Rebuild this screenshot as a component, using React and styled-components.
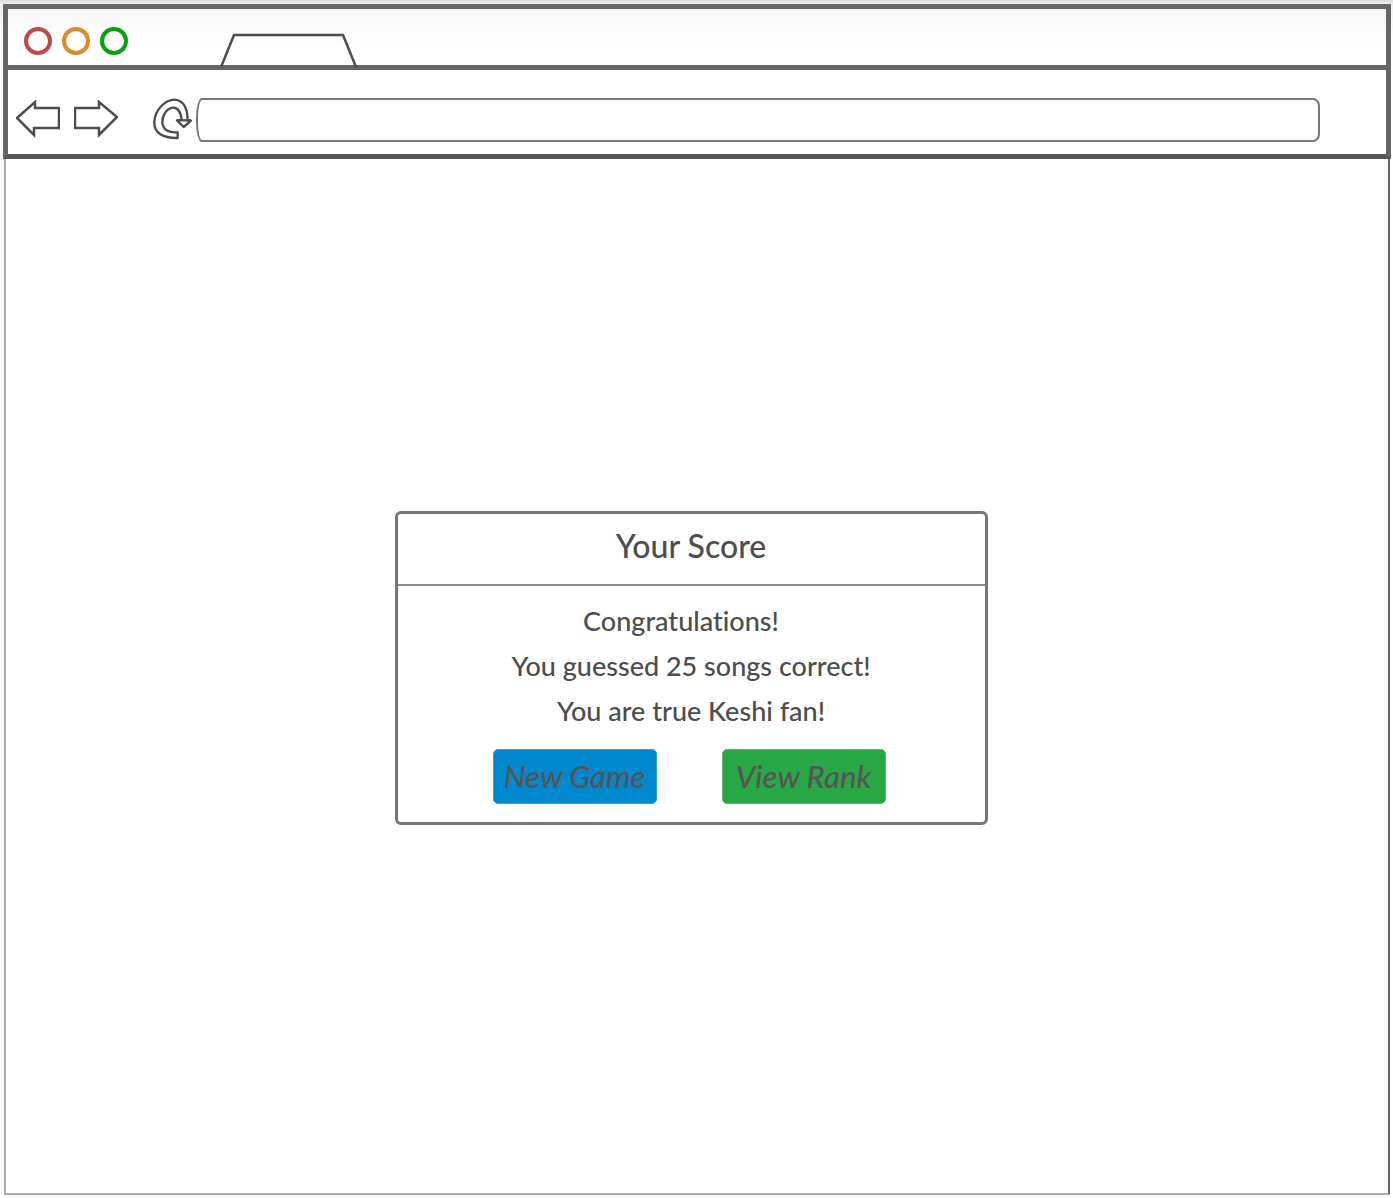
import React from "react";
import styled, { createGlobalStyle } from "styled-components";

const ink = "#666666";
const darkInk = "#4d4d4d";

const GlobalStyle = createGlobalStyle`
  * { box-sizing: border-box; }
  body {
    margin: 0;
    background: #ffffff;
    color: ${darkInk};
    font-family: Lato, "Open Sans", sans-serif;
    font-weight: 500;
    font-variant-ligatures: none;
  }
`;

const Page = styled.div`
  display: flex;
  flex-direction: column;
  min-height: 100vh;
  padding: 4px 2px 3px 3px;
  background: linear-gradient(#dddddd, #eeeeee 4px, #ffffff 40px);
`;

const Chrome = styled.header`
  border: 5px solid ${ink};
  border-bottom-color: #555555;
  background: #ffffff;
`;

const TitleBar = styled.div`
  display: flex;
  align-items: flex-end;
  justify-content: flex-start;
  height: 61px;
  padding-left: 16px;
  border-bottom: 5px solid ${ink};
  background: linear-gradient(#f7f7f7, #ffffff 36px);
`;

const WindowControls = styled.div`
  display: flex;
  gap: 10px;
  padding-bottom: 10px;
`;

const WindowButton = styled.button`
  width: 28px;
  height: 28px;
  padding: 0;
  border: 4px solid ${({ $color }) => $color};
  border-radius: 50%;
  background: #ffffff;
`;

const TabShape = styled.svg`
  display: block;
  margin: 0 0 -3px 92px;
`;

const Toolbar = styled.div`
  display: flex;
  align-items: center;
  padding: 28px 66px 12px 8px;
`;

const IconButton = styled.button`
  display: flex;
  flex: none;
  padding: 0 0 2px;
  margin-right: ${({ $gap }) => $gap}px;
  border: 0;
  background: none;
  color: ${darkInk};
`;

const AddressForm = styled.form`
  display: flex;
  flex: 1;
`;

const Address = styled.input`
  flex: 1;
  min-width: 0;
  height: 44px;
  padding: 0 12px;
  border: 2px solid #777777;
  border-radius: 6px 7px 7px 6px / 20px 8px 8px 20px;
  background: #ffffff;
  color: inherit;
  font: inherit;
  font-size: 20px;
`;

const Viewport = styled.main`
  display: flex;
  flex: 1;
  align-items: center;
  justify-content: center;
  margin: 0 1px;
  padding: 0 12px 16px 0;
  border: solid #aaaaaa;
  border-width: 0 2px 2px 2px;
  border-right-color: ${ink};
  background: #ffffff;
`;

const Card = styled.section`
  width: 593px;
  max-width: 94%;
  border: 3px solid #777777;
  border-radius: 6px;
  text-align: center;
`;

const CardTitle = styled.h1`
  margin: 0;
  padding: 12px 16px 18px;
  border-bottom: 2px solid #8c8c8c;
  font-size: 32px;
  font-weight: 500;
  line-height: 40px;
`;

const CardBody = styled.div`
  padding: 12px 16px 18px;
`;

const Message = styled.p`
  margin: 0;
  padding-right: ${({ $shift }) => $shift || 0}px;
  font-size: 27px;
  line-height: 45px;
`;

const Actions = styled.div`
  display: flex;
  flex-wrap: wrap;
  justify-content: center;
  gap: 16px 65px;
  padding: 16px 4px 0 0;
`;

const ActionButton = styled.button`
  width: 164px;
  height: 55px;
  padding: 0 0 2px;
  border: 1px solid ${({ $edge }) => $edge};
  border-radius: 5px;
  background: ${({ $fill }) => $fill};
  color: #555555;
  font-family: inherit;
  font-size: 31px;
  font-style: italic;
  font-weight: 500;
  line-height: 40px;
`;

const windowButtons = [
  { name: "Close", color: "#bd4b4b" },
  { name: "Minimize", color: "#df8a24" },
  { name: "Maximize", color: "#04a20c" },
];

function ArrowIcon({ points }) {
  return (
    <svg width="44" height="38" viewBox="0 0 44 38" fill="none" stroke="currentColor" strokeWidth="2.5">
      <polygon points={points} />
    </svg>
  );
}

function ReloadIcon() {
  return (
    <svg width="40" height="42" viewBox="456 294 120 126" fill="none" stroke="currentColor" strokeWidth="7" strokeLinejoin="round">
      <path d="M533 414 C490 415 461 400 463 365 C465 330 495 299 524 299 C552 301 565 330 562 361 L573 362 L551 381 L531 361 L545 359 C542 335 532 322 518 323 C500 326 487 345 487 366 C488 389 505 399 533 397 Z" />
      <path d="M531 361 H573" />
    </svg>
  );
}

export default function App() {
  return (
    <Page>
      <GlobalStyle />
      <Chrome>
        <TitleBar>
          <WindowControls>
            {windowButtons.map(({ name, color }) => (
              <WindowButton key={name} type="button" aria-label={name} $color={color} />
            ))}
          </WindowControls>
          <TabShape width="138" height="36" viewBox="0 0 138 36" fill="none" stroke={darkInk} strokeWidth="2.5" aria-hidden="true">
            <path d="M1 35 L14 3 H123 L136 35" />
          </TabShape>
        </TitleBar>
        <Toolbar>
          <IconButton type="button" aria-label="Back" $gap={14}>
            <ArrowIcon points="1,18 19,2 19,8 43,8 43,28 18,28 18,35" />
          </IconButton>
          <IconButton type="button" aria-label="Forward" $gap={34}>
            <ArrowIcon points="1,8 25,8 25,2 43,17 25,35 25,28 1,28" />
          </IconButton>
          <IconButton type="button" aria-label="Reload" $gap={4}>
            <ReloadIcon />
          </IconButton>
          <AddressForm>
            <Address type="text" aria-label="Address" />
          </AddressForm>
        </Toolbar>
      </Chrome>
      <Viewport>
        <Card>
          <CardTitle>Your Score</CardTitle>
          <CardBody>
            <Message $shift={20}>Congratulations!</Message>
            <Message>You guessed 25 songs correct!</Message>
            <Message>You are true Keshi fan!</Message>
            <Actions>
              <ActionButton type="button" $fill="#0088ce" $edge="#3d9fd0">New Game</ActionButton>
              <ActionButton type="button" $fill="#28a745" $edge="#5cb873">View Rank</ActionButton>
            </Actions>
          </CardBody>
        </Card>
      </Viewport>
    </Page>
  );
}
